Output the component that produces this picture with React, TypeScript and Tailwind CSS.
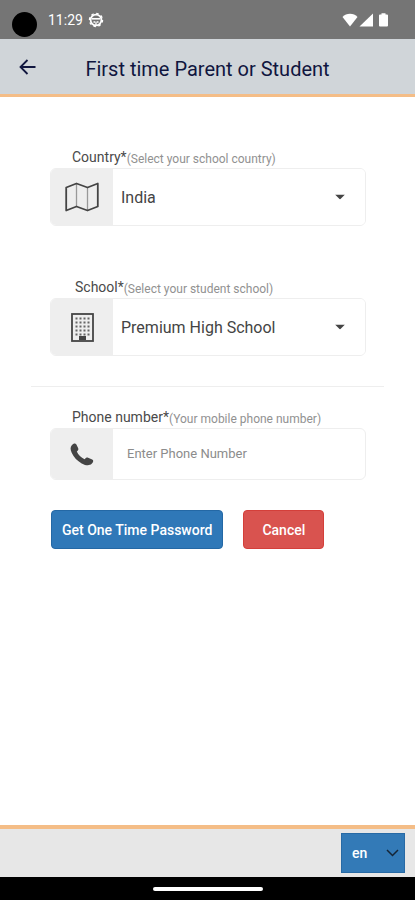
import { useState } from "react";
import type { ReactNode } from "react";

const countries = ["India", "Nepal", "Sri Lanka"];
const schools = ["Premium High School", "City Public School"];
const languages = ["en", "hi", "fr"];

function StatusBar() {
  return (
    <div className="flex h-[39px] items-center bg-[#757575] pr-[27px] pl-3 text-white">
      <span className="mt-[10px] size-[25px] rounded-full bg-black" />
      <span className="ml-[11px] text-sm">11:29</span>
      <svg className="ml-[5px]" width="16" height="16" viewBox="0 0 16 16" fill="none" stroke="currentColor">
        <circle cx="8" cy="8" r="5.4" strokeWidth="1.800" />
        <circle cx="8" cy="8" r="6.6" strokeWidth="1.2" strokeDasharray="2.6 2.58" />
        <path d="M4 6.800h8" strokeWidth="1.600" />
        <path d="M5.500 10h1.500M9 10h1.500M8 9.500v4" strokeWidth="1.300" />
      </svg>
      <svg className="ml-auto" width="16" height="14" viewBox="0 0 16 14" fill="currentColor">
        <path d="M8 13.5 0.5 4C2.5 2 5 0.8 8 0.8s5.500 1.200 7.500 3.200z" />
      </svg>
      <svg className="ml-px" width="14" height="14" viewBox="0 0 14 14" fill="currentColor">
        <path d="M14 0.500V13.500H0.500z" />
      </svg>
      <svg className="ml-[6px]" width="9" height="14" viewBox="0 0 9 14" fill="currentColor">
        <path d="M2.500 0.300h4v1.200H8q1 0 1 1V12.500q0 1-1 1H1q-1 0-1-1V2.500q0-1 1-1h1.500z" />
      </svg>
    </div>
  );
}

function MapIcon() {
  return (
    <svg width="34" height="30" viewBox="0 0 34 30" fill="none" stroke="#444" strokeLinejoin="round">
      <path d="M11.500 1.500V25M22.500 5v23.500" stroke="#999" strokeWidth="1.300" />
      <path d="M1.200 5.500 11.500 1.500 22.500 5.500 32.800 1.500V24.500L22.500 28.500 11.500 24.500 1.200 28.500z" strokeWidth="1.800" />
    </svg>
  );
}

function BuildingIcon() {
  const rows = [5, 9, 13, 17, 21];
  const cols = [4, 8, 12, 16];
  return (
    <svg width="23" height="29" viewBox="0 0 23 29" fill="none">
      <rect x="1" y="1" width="21" height="27" stroke="#444" strokeWidth="1.800" />
      {rows.map((y) =>
        cols.map((x) => <rect key={`${x}-${y}`} x={x + 0.5} y={y - 0.5} width="2" height="2" fill="#666" />)
      )}
      <path d="M8 27v-4h7v4z" fill="#444" />
    </svg>
  );
}

function PhoneIcon() {
  return (
    <svg width="24" height="23" viewBox="0 0 24 23" fill="#444">
      <path d="M1.800 2.300C3.600.3 5.400.1 6.400 1.600L8.200 5.200C8.700 6.500 8.100 7.400 6.800 8.600 8.300 12 11 14.700 14.600 16.300 15.800 14.800 16.900 14.200 18.100 14.700L22.200 16.600C23.800 17.700 23.500 19 21.700 20.800 19.500 22.900 16 22.700 11.700 20.400 7.300 18 3.800 14.300 1.800 10 0.200 6.600.2 4.100 1.800 2.300z" />
    </svg>
  );
}

type FieldProps = {
  id: string;
  label: string;
  hint: string;
  icon: ReactNode;
  labelClass: string;
  boxClass: string;
  children: ReactNode;
};

function Field({ id, label, hint, icon, labelClass, boxClass, children }: FieldProps) {
  return (
    <div>
      <label htmlFor={id} className={`flex h-[22px] items-end pb-px text-sm text-[#4a4a4a] ${labelClass}`}>
        {label}
        <span className="text-xs text-[#919191]">{hint}</span>
      </label>
      <div className={`flex overflow-hidden rounded-md border border-[#eee] ${boxClass}`}>
        <div className="flex w-[62px] shrink-0 items-center justify-center bg-[#eee]">{icon}</div>
        {children}
      </div>
    </div>
  );
}

type SelectProps = {
  id: string;
  options: string[];
};

function FieldSelect({ id, options }: SelectProps) {
  const [value, setValue] = useState(options[0]);
  return (
    <div className="relative flex-1">
      <select
        id={id}
        value={value}
        onChange={(e) => setValue(e.target.value)}
        className="size-full appearance-none bg-white pt-0.5 pr-10 pl-2 text-base text-[#444] outline-none"
      >
        {options.map((option) => (
          <option key={option}>{option}</option>
        ))}
      </select>
      <svg className="pointer-events-none absolute top-1/2 right-5 -translate-y-1/2" width="10" height="5" viewBox="0 0 10 5" fill="#444">
        <path d="M0 0h10L5 5z" />
      </svg>
    </div>
  );
}

export default function App() {
  const [phone, setPhone] = useState("");
  const [language, setLanguage] = useState("en");

  return (
    <div className="flex min-h-screen flex-col bg-white font-[Roboto,sans-serif]">
      <StatusBar />
      <header className="flex h-[58px] items-center border-b-3 border-[#f4bd87] bg-[#d0d5d9] text-[#10163f]">
        <button type="button" aria-label="Back" className="ml-[19px] shrink-0">
          <svg width="17" height="16" viewBox="0 0 17 16" fill="none" stroke="currentColor" strokeWidth="1.800">
            <path d="M16.500 8H1.500M8.500 1 1.500 8l7 7" />
          </svg>
        </button>
        <h1 className="flex-1 pt-1 pr-[36px] text-center text-xl">First time Parent or Student</h1>
      </header>

      <form className="flex-1 pt-[49px]" onSubmit={(e) => e.preventDefault()}>
        <div className="mr-[49px] ml-[50px]">
          <Field
            id="country"
            label="Country*"
            hint="(Select your school country)"
            icon={<MapIcon />}
            labelClass="pl-[22px]"
            boxClass="h-[58px]"
          >
            <FieldSelect id="country" options={countries} />
          </Field>
          <div className="mt-[50px]">
            <Field
              id="school"
              label="School*"
              hint="(Select your student school)"
              icon={<BuildingIcon />}
              labelClass="pl-[25px]"
              boxClass="h-[58px]"
            >
              <FieldSelect id="school" options={schools} />
            </Field>
          </div>
        </div>

        <hr className="mt-[30px] mr-[31px] mb-[19px] ml-[31px] border-[#eee]" />

        <div className="mr-[49px] ml-[50px]">
          <Field
            id="phone"
            label="Phone number*"
            hint="(Your mobile phone number)"
            icon={<PhoneIcon />}
            labelClass="pl-[22px]"
            boxClass="h-[52px]"
          >
            <input
              id="phone"
              type="tel"
              value={phone}
              onChange={(e) => setPhone(e.target.value)}
              placeholder="Enter Phone Number"
              className="min-w-0 flex-1 px-[14px] text-[13px] text-[#333] outline-none placeholder:text-[#8c8c8c]"
            />
          </Field>
          <div className="mt-[30px] flex gap-5 pl-px text-sm font-medium text-white">
            <button type="submit" className="h-[39px] rounded border border-[#2468a5] bg-[#2f78b8] px-[10px]">
              Get One Time Password
            </button>
            <button type="button" className="h-[39px] rounded border border-[#d43f3a] bg-[#d9534f] px-[18px]">
              Cancel
            </button>
          </div>
        </div>
      </form>

      <footer className="flex h-[52px] items-start justify-end border-t-4 border-[#f4bd87] bg-[#e7e7e7] pt-1 pr-[10px]">
        <div className="relative">
          <select
            aria-label="Language"
            value={language}
            onChange={(e) => setLanguage(e.target.value)}
            className="h-10 w-16 appearance-none border border-[#286aa5] bg-[#337ab7] pl-[10px] text-sm font-medium text-white outline-none"
          >
            {languages.map((code) => (
              <option key={code}>{code}</option>
            ))}
          </select>
          <svg
            className="pointer-events-none absolute top-1/2 right-[6px] -translate-y-1/2"
            width="13"
            height="8"
            viewBox="0 0 13 8"
            fill="none"
            stroke="#152536"
            strokeWidth="1.500"
          >
            <path d="m1 1 5.500 5.500L12 1" />
          </svg>
        </div>
      </footer>
      <div className="flex h-[23px] items-center justify-center bg-black">
        <span className="h-1 w-[110px] rounded-full bg-white" />
      </div>
    </div>
  );
}
